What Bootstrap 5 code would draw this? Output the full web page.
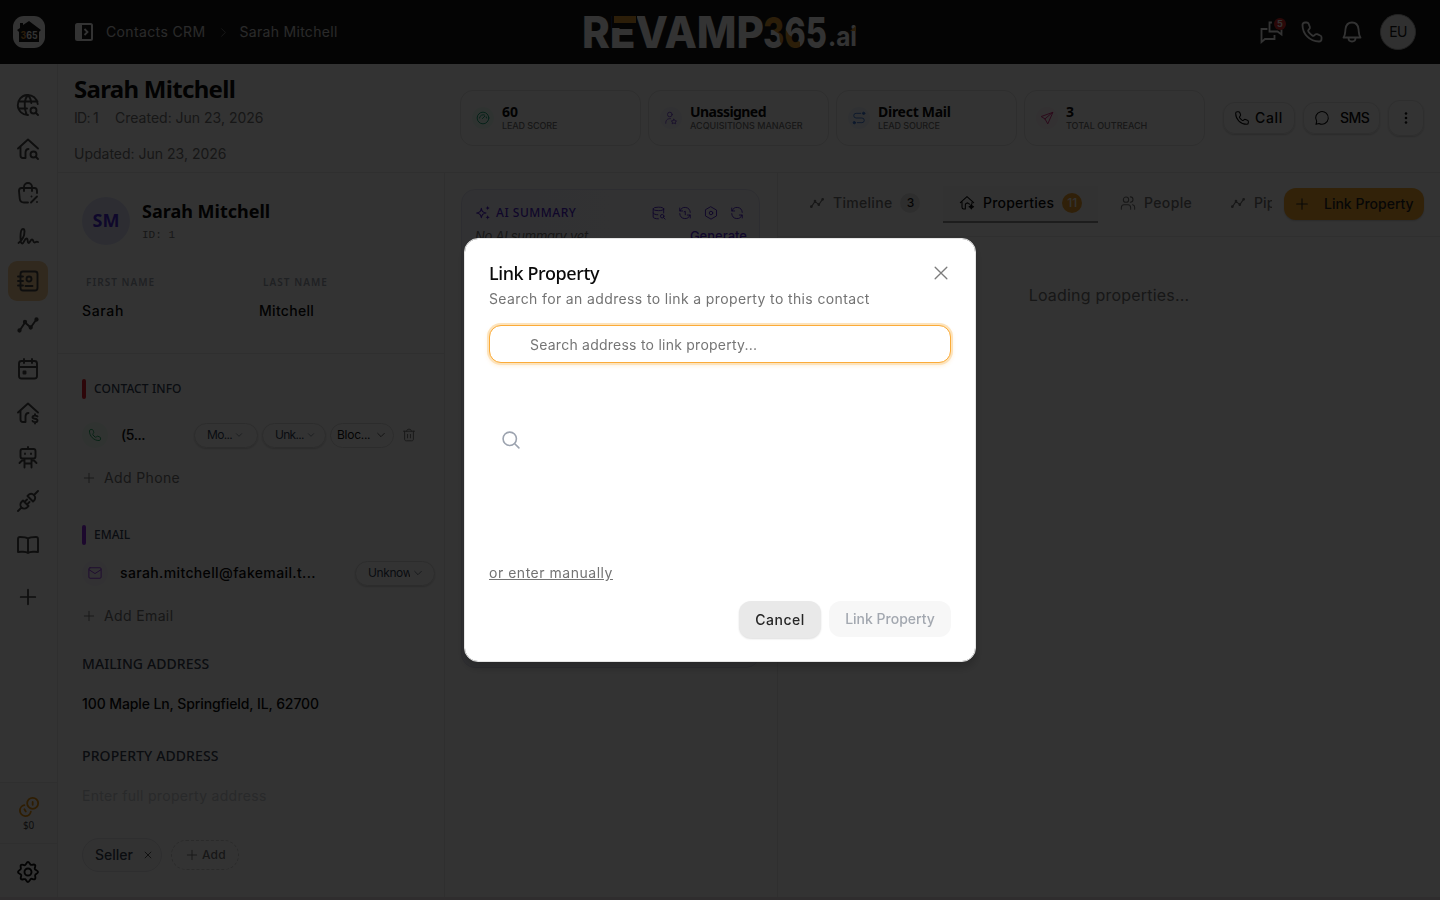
<!DOCTYPE html>
<html lang="en">
<head>
<meta charset="utf-8">
<meta name="viewport" content="width=device-width, initial-scale=1">
<title>Sarah Mitchell - Contacts CRM</title>
<link href="https://cdn.jsdelivr.net/npm/bootstrap@5.3.0/dist/css/bootstrap.min.css" rel="stylesheet">
<style>
body{font-family:Inter,"Liberation Sans",sans-serif;font-size:14px;line-height:1.4;color:#0a0a0a;background:#fff;height:900px;overflow:hidden}
span,h1,h2,p,a,button{white-space:nowrap}
.hd{font-family:"Noto Sans","Open Sans",sans-serif}
.mut{color:#737373}
.min-h0{min-height:0}
.min-w0{min-width:0}
.f9{font-size:9px}.f10{font-size:10px}.f12{font-size:12px}.f13{font-size:13px}.f18{font-size:18px}
/* letter tracking */
.t1{letter-spacing:.1px}.t2{letter-spacing:.2px}.t3{letter-spacing:.3px}.t4{letter-spacing:.37px}.t5{letter-spacing:.52px}.t7{letter-spacing:.67px}.t10{letter-spacing:1.04px}
.n1{letter-spacing:-.1px}.n3{letter-spacing:-.27px}.n4{letter-spacing:-.4px}.n5{letter-spacing:-.55px}.n7{letter-spacing:-.7px}
/* icons */
.ic{fill:none;stroke:currentColor;stroke-width:1.6;stroke-linecap:round;stroke-linejoin:round;flex:none;width:16px;height:16px}
.i8{width:8px;height:8px}.i10{width:10px;height:10px}.i14{width:14px;height:14px}.i20{width:20px;height:20px}.i22{width:22px;height:22px}.i24{width:24px;height:24px}
/* top bar */
.topbar{height:64px;background:#171717;color:#fff;flex:none}
.topbar .crumb{color:#d0d0d0}
.brand{width:32px;height:32px;border-radius:11px;background:#fff;margin-left:13px}
.toggle{margin:0 13px 0 30px}
.crumb-sep{width:9px;height:9px;margin:0 12px 0 13px;color:#777;stroke-width:2.5}
.wordmark{left:580px;top:0}
.top-actions{padding-right:24px;gap:16px}
.top-actions .ic{stroke-width:1.8}
.note{width:12px;height:12px;left:14px;top:-2px;background:#d62a2a;font-size:9px}
.avatar{width:36px;height:36px;background:#f0f0f0;border:1px solid #aaa;color:#171717}
/* rail */
.rail{width:58px;border-right:1px solid #ebebeb;color:#464646;flex:none}
.rail-list{padding:21px 1px 0 0}
.rail-item{width:40px;height:40px;border-radius:9px;margin-bottom:4px}
.rail-item.on{background:#f5cd98}
.rail-item .ic,.gear .ic{width:24px;height:24px;stroke-width:1.9}
.rail-add{margin-top:8px}
.rail-add .ic{width:22px;height:22px}
.rail-foot{border-top:1px solid #ebebeb;height:61px;background:#fafafa;padding-top:13px;line-height:14px}
.coins{color:#e8920c;stroke-width:2}
.gear{border-top:1px solid #ebebeb;height:57px;background:#fafafa;color:#111;padding-right:1px}
/* contact header */
.head{height:109px;border-bottom:1px solid #ebebeb;flex:none}
.who{width:402px;padding-left:16px;line-height:24px}
.who h1{font-size:24px;line-height:32px;margin:9px 0 1px}
.who .ids{gap:17px;height:24px;margin-bottom:12px}
.stats{gap:7px}
.stat{width:181px;height:56px;border:1px solid #e4e4e4;border-radius:13px;padding-left:11px;line-height:14px;gap:8px}
.stat>div{padding-top:2px}
.dot{width:22px;height:22px;border-radius:50%;flex:none}
.dot.lg{width:26px;height:26px}
.green{background:#ecfdf5;color:#10a070}.violet{background:#f5f3ff;color:#7c4dd8}.blue{background:#eff6ff;color:#3b76d6}.pink{background:#fdf2f8;color:#d6267c}.purple{background:#faf5ff;color:#9333ea}.lime{background:#f0fdf4;color:#16a35a}
.head-actions{gap:8px;padding-right:16px}
.pillbtn{height:32px;border:1px solid #e4e4e4;border-radius:12px;box-shadow:0 1px 2px #0003;font-weight:500}
.pb-call{width:72px;padding-left:10px;gap:5px}
.pb-sms{width:77px;padding-left:10px;gap:10px}
.pb-more{width:36px;height:36px}
/* left column */
.col-l{width:387px;border-right:1px solid #ebebeb;flex:none}
.row-x{padding-left:24px}
.person{padding-top:24px;gap:12px}
.initials{width:48px;height:48px;background:#e0e2fb;color:#4a2bd8}
.person .name{line-height:28px}
.mono{font:11px/20px "Liberation Mono",monospace}
.lab{height:20px;margin-top:27px;padding-left:28px;color:#9ca3af;line-height:20px}
.lab span:first-child,.val span:first-child{width:177px}
.val{height:61px;line-height:38px}
.rule{height:1px;background:#ebebeb}
.sect{gap:8px;color:#334155;padding-top:2px}
.h20{height:20px}.h26{height:26px}.h36{height:36px}.h44{height:44px}.h52{height:52px}.h60{height:60px}.h68{height:68px}.h98{height:98px}
.tick{width:4px;height:20px;border-radius:2px}
.tick.red{background:#e0202f}.tick.vio{background:#8b2be0}
.sel{height:25px;width:64px;border:1px solid #dcdcdc;border-radius:13px;font-size:12px;box-shadow:0 1px 2px #0003;color:#334155;padding-left:12px;margin-right:4px;gap:3px}
.sel.flat{box-shadow:none;padding-left:6px;gap:6px;color:#111}
.sel.wide{width:80px}
.clip{width:42px;overflow:hidden}
.num{margin-left:13px;width:73px}
.mail{margin-left:12px;width:235px}
.addr{color:#374151}
.ghost{color:#c9cbd0}
.add-row{gap:8px}
.chip{width:80px;height:34px;border-radius:17px;border:1px solid #e4e4e8;background:#fafafa;padding-left:12px;gap:10px;color:#374151}
.chip-add{width:68px;height:30px;border-radius:15px;border:1px dashed #d0d0d0;padding-left:13px;gap:3px}
.chips{gap:9px}
/* middle column */
.col-m{width:333px;border-right:1px solid #ebebeb;flex:none;padding:16px 0 0 16px}
.ai{width:299px;height:479px;border:1px solid #e2e2f2;border-radius:14px;background:linear-gradient(90deg,#f4f5ff,#faf9ff);color:#4f1fd0;padding:13px 12px 0 13px}
.ai-title{margin-left:5px;width:156px}
.ai-tools{gap:12px}
.ai-line{margin-top:4px}
/* right column */
.tabs{height:64px;border-bottom:1px solid #ebebeb;padding-right:16px}
.tab{gap:8px;padding-bottom:3px}
.tab-time{width:165px;padding-left:31px}
.tab-on{width:155px;height:37px;background:#fafafa;border-bottom:2px solid #8f8f8f;color:#0a0a0a;padding:0 0 0 16px;margin-top:-1px}
.tab-people{width:132px;padding-left:22px}
.tab-pipe{width:42px;margin-right:12px;overflow:hidden}
.cnt{width:20px;height:20px;border-radius:50%;font-size:12px;flex:none;background:#e6e6e6;color:#171717}
.cnt.hot{background:#f0a02d;color:#fff}
.link-btn{width:140px;height:32px;border-radius:12px;background:#fbab2e;color:#262626;padding-left:10px;gap:14px;box-shadow:0 1px 2px #0003;margin-top:-1px}
.loading{font-size:16px;margin-top:47px}
.strip{height:3px;background:#eadfe4}
/* dialog */
.modal-backdrop{--bs-backdrop-opacity:.8}
.modal-dialog{--bs-modal-width:512px}
.modal-content{height:424px;border:1px solid #e5e5e5;border-radius:14px;padding:24px 24px 23px;box-shadow:0 6px 10px #0003}
.modal-content>*{flex:none}
.modal-content h2{font-size:18px;font-weight:500;line-height:20px}
.modal-content p{line-height:20px;margin:6px 0 16px}
.close-x{color:#7c7c7c}
.modal-content .search{height:38px;border:1px solid #fbab38;border-radius:12px;box-shadow:0 0 0 2px #fde3bb,0 2px 4px 1px #fbab3830;padding:0 0 0 40px;font-size:14px;letter-spacing:.24px}
.search::placeholder{color:#757575}
.glass{margin:67px 0 113px 12px;color:#9ca3af;stroke-width:1.9}
.manual{line-height:20px;margin-bottom:18px}
.btn-x{height:36px;border-radius:12px;font-size:14px;font-weight:500;border:0}
.btn-cancel{width:82px;height:37px;background:#e9e9e9;color:#262626;box-shadow:0 1px 2px #0002}
.btn-link-p{width:122px;background:#f7f7f7;color:#a3a8b0}
</style>
</head>
<body class="d-flex flex-column">
<svg width="0" height="0" class="position-absolute">
<symbol id="phone" viewBox="0 0 24 24"><path d="M8.600 3.700C8.200 2.800 7.600 2.500 6.700 2.500H5C3.600 2.500 2.500 3.600 2.500 5c0 9.100 7.400 16.500 16.500 16.500 1.400 0 2.500-1.100 2.500-2.500v-1.700c0-.9-.5-1.500-1.300-1.800l-3-1.300c-.8-.3-1.500-.2-2.100.4l-1 .9c-.7.5-1.200.5-1.800 0a16 16 0 0 1-3.800-3.800c-.5-.6-.5-1.200 0-1.800l.9-1c.6-.6.7-1.300.4-2.100z"/></symbol>
<symbol id="trend" viewBox="0 0 24 24"><path d="M4 17 9 9.500 14.700 14.500 20 7"/><g fill="currentColor"><circle cx="3.500" cy="17.500" r="1.200"/><circle cx="9" cy="9" r="1.200"/><circle cx="14.700" cy="14.500" r="1.200"/><circle cx="20.500" cy="6.500" r="1.200"/></g></symbol>
<symbol id="plus" viewBox="0 0 24 24"><path d="M12 4v16M4 12h16"/></symbol>
<symbol id="x" viewBox="0 0 24 24"><path d="M5 5 19 19M19 5 5 19"/></symbol>
<symbol id="chev" viewBox="0 0 24 24"><path d="m4 8 8 8 8-8"/></symbol>
<symbol id="refresh" viewBox="0 0 24 24"><path d="M3 3.500v5h5M21 20.500v-5h-5M3.500 8.500A9 9 0 0 1 21 11M20.500 15.500A9 9 0 0 1 3 13"/></symbol>
<symbol id="house" viewBox="0 0 24 24"><path d="m2 11.500 10-9 10 9M4.500 9.500v9c0 2 .7 2.500 2.500 2.500h2.500v-5.500c0-2.300 1-3.500 3-3.500"/></symbol>
</svg>

<header class="topbar d-flex align-items-center position-relative">
  <div class="brand d-flex align-items-center justify-content-center">
    <svg width="26" height="24" viewBox="0 0 26 24"><path fill="#171717" d="M1 10 4 8V3h3v2l6-4 12 9-2 2v10H3V12z"/><text x="4.500" y="19" font-family="Inter" font-weight="700" font-size="10" textLength="17" lengthAdjust="spacingAndGlyphs" fill="#fff"><tspan fill="#d58f32">3</tspan>65</text></svg>
  </div>
  <svg class="toggle" width="18" height="18" viewBox="0 0 18 18"><rect x="1" y="1" width="16" height="16" rx="1.500" fill="none" stroke="#fff" stroke-width="2"/><path fill="#fff" d="M1 1h6v16H1z"/><path d="m9.500 6 3 3-3 3" fill="none" stroke="#fff" stroke-width="1.800"/></svg>
  <span class="crumb t4">Contacts CRM</span>
  <svg class="ic crumb-sep" viewBox="0 0 24 24"><path d="m7 2 10 10L7 22"/></svg>
  <span class="crumb t3">Sarah Mitchell</span>
  <svg class="wordmark position-absolute" width="280" height="64" viewBox="580 0 280 64" font-family="Inter,sans-serif" font-weight="800" font-size="44" fill="#fff">
    <defs><pattern id="duo" patternUnits="userSpaceOnUse" x="760" y="0" width="70" height="64"><path fill="#fff" d="M0 0h70v64H0z"/><path fill="#dc962f" d="M3 12h20v13l6 10 11 7v8H28l-8-8-1-8-6-4H3z"/></pattern></defs>
    <text x="582" y="48" textLength="182" lengthAdjust="spacingAndGlyphs">REVAMP</text>
    <path fill="#171717" d="M612 14h25v14h-25z"/><path fill="#dc962f" d="M614 16h22v7h-22z"/>
    <text x="763" y="47.500" font-size="43" textLength="64" lengthAdjust="spacingAndGlyphs" fill="url(#duo)">365</text>
    <text x="828" y="46" font-size="27" font-weight="700" textLength="29" lengthAdjust="spacingAndGlyphs">.ai</text><path fill="#dc962f" d="M850 31 856 26v5z"/>
  </svg>
  <div class="top-actions d-flex align-items-center ms-auto">
    <div class="position-relative i24"><svg class="ic i24 d-block" viewBox="0 0 24 24"><path stroke-linecap="square" stroke-linejoin="miter" d="M11 2.500H9.500v9h8l4 3v-4M6.500 9h-5v13l3.500-3h9.500v-3"/></svg><span class="note position-absolute rounded-circle d-flex align-items-center justify-content-center fw-bold">5</span></div>
    <svg class="ic i24"><use href="#phone"/></svg>
    <svg class="ic i24" viewBox="0 0 24 24"><path d="M3.500 17.500h17c-2-2.500-1.500-5-2-8.500-.5-4-3-6.500-6.500-6.500S6 5 5.500 9c-.5 3.500 0 6-2 8.500zM8.500 18c0 2 1.500 3.500 3.500 3.500s3.500-1.500 3.500-3.500"/></svg>
    <span class="avatar rounded-circle d-flex align-items-center justify-content-center n5">EU</span>
  </div>
</header>

<div class="d-flex flex-grow-1 min-h0">
  <nav class="rail d-flex flex-column">
    <div class="rail-list d-flex flex-column align-items-center flex-grow-1">
      <div class="rail-item d-flex align-items-center justify-content-center"><svg class="ic" viewBox="0 0 24 24"><path d="M21.700 11A10 10 0 1 0 12 22M2.500 8.500h19M2.500 15.500H11M12 2c-3.500 3.500-4.700 12-1.500 19M12 2c2 2 3 5 3.300 8"/><circle cx="17.500" cy="17.500" r="3"/><path d="m20 20 2 2"/></svg></div>
      <div class="rail-item d-flex align-items-center justify-content-center"><svg class="ic" viewBox="0 0 24 24"><use href="#house"/><circle cx="17.500" cy="17.500" r="3"/><path d="m20 20 2 2"/></svg></div>
      <div class="rail-item d-flex align-items-center justify-content-center"><svg class="ic" viewBox="0 0 24 24"><path d="M12 21.500H8c-3 0-4-1-4.300-4L3 10c0-2 .5-3 2.500-3h13C20 7 21 8 21 10v2M8 10V6a4 4 0 0 1 8 0v4M15 21.500l6-6M15.500 15.500h.01M21 21h.01"/></svg></div>
      <div class="rail-item d-flex align-items-center justify-content-center"><svg class="ic" viewBox="0 0 24 24"><path d="M2.500 18c4-3 6-8 6-11.500 0-1.500-.6-2.500-1.500-2.500-2 0-2.500 4-2.500 8s.5 6.500 1.800 6.500c1.700 0 2.200-5 4.200-5s.5 4.500 2 4.500 2-3.500 3.500-3.500 1 3 2.500 3 1.500-1.500 3.500-.5"/></svg></div>
      <div class="rail-item on d-flex align-items-center justify-content-center"><svg class="ic" viewBox="0 0 24 24"><rect x="4.500" y="2.500" width="17" height="19" rx="2.500"/><circle cx="13" cy="10" r="2.500"/><path d="M9.500 17h7M2 7.500h5M2 12h5M2 16.500h5"/></svg></div>
      <div class="rail-item d-flex align-items-center justify-content-center"><svg class="ic"><use href="#trend"/></svg></div>
      <div class="rail-item d-flex align-items-center justify-content-center"><svg class="ic" viewBox="0 0 24 24"><rect x="3" y="4" width="18" height="17.500" rx="2.500"/><path d="M3 10h18M8 2v4M16 2v4"/><path d="M7.500 14.500h2v2h-2z" fill="currentColor"/></svg></div>
      <div class="rail-item d-flex align-items-center justify-content-center"><svg class="ic" viewBox="0 0 24 24"><use href="#house"/><path d="M21.500 15.500c-.5-1-5-1.500-5 .7 0 2.300 5 .7 5 3.200 0 2.300-4.500 2-5 .6M19 13.300v1M19 21.500v1"/></svg></div>
      <div class="rail-item d-flex align-items-center justify-content-center"><svg class="ic" viewBox="0 0 24 24"><rect x="4.500" y="4" width="15" height="9.500" rx="2"/><path d="M12 2v2M9 8.500v.5M15 8.500v.5M8.500 14v8.500M15.500 14v8.500M8.500 18.500h7M8.500 15.500H6L3.500 18M15.500 15.500H18l2.500 2.500"/></svg></div>
      <div class="rail-item d-flex align-items-center justify-content-center"><svg class="ic" viewBox="0 0 24 24"><path d="m2 22 3.500-3.500M5.500 18.500a4 4 0 0 1 0-5.500l1.500-1.500L12.500 17 11 18.500a4 4 0 0 1-5.500 0zM8.500 13 11 10.500M11 15.500l2.500-2.500M22 2l-3.500 3.500M11.500 7 17 12.500 18.500 11a4 4 0 0 0-5.500-5.500z"/></svg></div>
      <div class="rail-item d-flex align-items-center justify-content-center"><svg class="ic" viewBox="0 0 24 24"><path d="M12 5.500C10 4 6 4 4 4c-1.500 0-2 .5-2 2v13c2-.5 8-.5 10 1 2-1.500 8-1.500 10-1V6c0-1.500-.5-2-2-2-2 0-6 0-8 1.500zM12 5.500V20"/></svg></div>
      <div class="rail-item rail-add d-flex align-items-center justify-content-center"><svg class="ic"><use href="#plus"/></svg></div>
    </div>
    <div class="rail-foot d-flex flex-column align-items-center">
      <svg class="ic i22 coins" viewBox="0 0 24 24"><circle cx="16" cy="8" r="6"/><path d="M16 6.500v3M7 10a6 6 0 1 0 7 7M7 14.500l1.500 2.500"/></svg>
      <span class="hd f10 n3">$0</span>
    </div>
    <div class="gear d-flex align-items-center justify-content-center"><svg class="ic" viewBox="0 0 24 24"><circle cx="12" cy="12" r="3.500"/><path d="M12 2c1.600 0 1.700 2.300 3 2.800s2.800-1 4 .2-.7 2.700-.2 4S22 10.400 22 12s-2.300 1.700-2.800 3 1 2.800-.2 4-2.700-.7-4-.2S13.600 22 12 22s-1.700-2.300-3-2.800-2.800 1-4-.2.7-2.700.2-4S2 13.600 2 12s2.300-1.700 2.800-3-1-2.800.2-4 2.700.7 4 .2S10.400 2 12 2z"/></svg></div>
  </nav>

  <main class="flex-grow-1 d-flex flex-column min-w0">
    <section class="head d-flex align-items-center">
      <div class="who align-self-start">
        <h1 class="hd fw-bold n7">Sarah Mitchell</h1>
        <div class="mut ids d-flex"><span class="n7">ID: 1</span><span>Created: Jun 23, 2026</span></div>
        <div class="mut">Updated: Jun 23, 2026</div>
      </div>
      <div class="stats d-flex">
        <div class="stat d-flex align-items-center"><span class="dot green d-flex align-items-center justify-content-center"><svg class="ic i14" viewBox="0 0 24 24"><circle cx="12" cy="12" r="10"/><path d="M6 12a6 6 0 0 1 9-5M17.500 10l.5 2M11 13l4-4"/></svg></span><div><div class="hd fw-bold">60</div><div class="mut f9 n1 fw-medium">LEAD SCORE</div></div></div>
        <div class="stat d-flex align-items-center"><span class="dot violet d-flex align-items-center justify-content-center"><svg class="ic i14" viewBox="0 0 24 24"><circle cx="10" cy="6" r="4"/><path d="M3 21c0-5 2-8 8-8M17 14l1.500 2.500 3 .5-2 2 .5 3-3-1.500-3 1.500.5-3-2-2 3-.5z"/></svg></span><div><div class="hd fw-bold n5">Unassigned</div><div class="mut f9 fw-medium">ACQUISITIONS MANAGER</div></div></div>
        <div class="stat d-flex align-items-center"><span class="dot blue d-flex align-items-center justify-content-center"><svg class="ic i14" viewBox="0 0 24 24"><path d="M15 4H7a4 4 0 0 0 0 8h10a4 4 0 0 1 0 8H9"/><g fill="currentColor"><circle cx="20" cy="4" r="2"/><circle cx="4" cy="20" r="2"/></g></svg></span><div><div class="hd fw-bold n3">Direct Mail</div><div class="mut f9 n1 fw-medium">LEAD SOURCE</div></div></div>
        <div class="stat d-flex align-items-center"><span class="dot pink d-flex align-items-center justify-content-center"><svg class="ic i14" viewBox="0 0 24 24"><path d="M21.500 2.500 2 9.500l6.500 4L13 21.500zM21.500 2.500 8.500 13.500"/></svg></span><div><div class="hd fw-bold">3</div><div class="mut f9 fw-medium">TOTAL OUTREACH</div></div></div>
      </div>
      <div class="head-actions d-flex align-items-center ms-auto">
        <span class="pillbtn pb-call d-flex align-items-center"><svg class="ic"><use href="#phone"/></svg><span class="t7">Call</span></span>
        <span class="pillbtn pb-sms d-flex align-items-center"><svg class="ic" viewBox="0 0 24 24"><path d="M3 21.500 4 17a9.500 9.500 0 1 1 3.500 3.200z"/></svg><span class="n5">SMS</span></span>
        <span class="pillbtn pb-more d-flex align-items-center justify-content-center"><svg width="16" height="16" fill="#111"><circle cx="8" cy="3.500" r="1.300"/><circle cx="8" cy="8" r="1.300"/><circle cx="8" cy="12.500" r="1.300"/></svg></span>
      </div>
    </section>

    <div class="d-flex flex-grow-1 min-h0">
      <section class="col-l">
        <div class="row-x person d-flex align-items-center">
          <span class="initials hd f18 rounded-circle d-flex align-items-center justify-content-center fw-bold">SM</span>
          <div><div class="name hd fw-bold f18">Sarah Mitchell</div><div class="mut mono">ID: 1</div></div>
        </div>
        <div class="lab d-flex hd fw-semibold f10"><span class="t10">FIRST NAME</span><span class="t10">LAST NAME</span></div>
        <div class="row-x val d-flex fw-medium"><span class="t7">Sarah</span><span class="t3">Mitchell</span></div>
        <div class="rule"></div>
        <div class="row-x sect h68 d-flex align-items-center hd f12 fw-medium"><i class="tick red"></i><span class="t1">CONTACT INFO</span></div>
        <div class="row-x h26 d-flex align-items-center">
          <span class="dot lg lime d-flex align-items-center justify-content-center"><svg class="ic i14"><use href="#phone"/></svg></span>
          <span class="num fw-medium n4">(5...</span>
          <span class="sel d-flex align-items-center"><span class="n7">Mo...</span><svg class="ic i8"><use href="#chev"/></svg></span>
          <span class="sel d-flex align-items-center"><span class="n7">Unk...</span><svg class="ic i8"><use href="#chev"/></svg></span>
          <span class="sel flat d-flex align-items-center"><span class="n3">Bloc...</span><svg class="ic i10"><use href="#chev"/></svg></span>
          <svg class="ic i14 mut ms-1" viewBox="0 0 24 24"><path d="M2.500 5.500h19M8 5.500c0-2 1-3.500 4-3.500s4 1.500 4 3.500M4.500 5.500V19c0 2 1 3 3 3h9c2 0 3-1 3-3V5.500M9.500 11v6M14.500 11v6"/></svg>
        </div>
        <div class="row-x h60 add-row mut d-flex align-items-center"><svg class="ic i14"><use href="#plus"/></svg><span class="t4">Add Phone</span></div>
        <div class="row-x sect h52 d-flex align-items-center hd f12 fw-medium"><i class="tick vio"></i><span>EMAIL</span></div>
        <div class="row-x h26 d-flex align-items-center">
          <span class="dot lg purple d-flex align-items-center justify-content-center"><svg class="ic i14" viewBox="0 0 24 24"><rect x="1.500" y="3" width="21" height="18" rx="2"/><path d="m2 6.500 10 6.500 10-6.500"/></svg></span>
          <span class="mail fw-medium t4">sarah.mitchell@fakemail.t...</span>
          <span class="sel wide d-flex align-items-center"><span class="clip n4">Unknown</span><svg class="ic i10"><use href="#chev"/></svg></span>
        </div>
        <div class="row-x h60 add-row mut d-flex align-items-center"><svg class="ic i14"><use href="#plus"/></svg><span class="t4">Add Email</span></div>
        <div class="row-x h36 addr hd fw-medium d-flex align-items-center"><span class="t1">MAILING ADDRESS</span></div>
        <div class="row-x h44 fw-medium d-flex align-items-center"><span class="n1">100 Maple Ln, Springfield, IL, 62700</span></div>
        <div class="row-x h60 addr hd fw-medium d-flex align-items-center"><span class="t1">PROPERTY ADDRESS</span></div>
        <div class="row-x h20 ghost d-flex align-items-center"><span class="t3">Enter full property address</span></div>
        <div class="row-x h98 chips d-flex align-items-center">
          <span class="chip d-flex align-items-center fw-medium">Seller<svg class="ic i10 text-black"><use href="#x"/></svg></span>
          <span class="chip-add mut f12 d-flex align-items-center fw-medium"><svg class="ic i14"><use href="#plus"/></svg><span class="t2">Add</span></span>
        </div>
      </section>

      <section class="col-m">
        <div class="ai">
          <div class="d-flex align-items-center h20">
            <svg class="ic" viewBox="0 0 24 24"><path d="M9.500 5c1 5 2 6 7 7-5 1-6 2-7 7-1-5-2-6-7-7 5-1 6-2 7-7z"/><g fill="currentColor" stroke="none"><path d="M19 1c.6 2.500 1.300 3 3.500 3.500C20.300 5 19.600 5.500 19 8c-.6-2.500-1.300-3-3.500-3.500C17.700 4 18.400 3.500 19 1zM19 15c.6 2.500 1.300 3 3.500 3.500-2.200.5-2.900 1-3.500 3.500-.6-2.500-1.300-3-3.500-3.500 2.200-.5 2.900-1 3.500-3.500z"/></g></svg>
            <span class="ai-title hd f12 fw-medium t5">AI SUMMARY</span>
            <div class="ai-tools d-flex">
              <svg class="ic i14" viewBox="0 0 24 24"><ellipse cx="11" cy="5" rx="9" ry="3"/><path d="M2 5v14c0 1.700 4 3 9 3M20 5v7M2 12c0 1.700 4 3 8 3"/><circle cx="17.500" cy="17.500" r="3"/><path d="m20 20 2.500 2.500"/></svg>
              <svg class="ic i14" viewBox="0 0 24 24"><use href="#refresh"/><path d="M10.500 10 12.500 9v6"/></svg>
              <svg class="ic i14" viewBox="0 0 24 24"><path d="M12 1.500 21.500 7v10L12 22.500 2.500 17V7z"/><circle cx="12" cy="12" r="3"/></svg>
              <svg class="ic i14"><use href="#refresh"/></svg>
            </div>
          </div>
          <div class="ai-line d-flex justify-content-between"><span class="fst-italic mut f13 n3">No AI summary yet</span><span class="text-decoration-underline fw-medium f13">Generate</span></div>
        </div>
      </section>

      <section class="flex-grow-1">
        <div class="tabs mut fw-medium d-flex align-items-center">
          <div class="tab tab-time d-flex align-items-center"><svg class="ic"><use href="#trend"/></svg><span class="t3">Timeline</span><span class="cnt d-flex align-items-center justify-content-center">3</span></div>
          <div class="tab tab-on d-flex align-items-center"><svg class="ic" viewBox="0 0 24 24"><use href="#house"/><path d="M19.500 11v2M12.500 12c2 0 3 1 3 2"/><path fill="currentColor" d="M18.500 14c.5 2.500 1 3 3.500 3.500-2.500.5-3 1-3.500 3.500-.5-2.500-1-3-3.500-3.500 2.500-.5 3-1 3.500-3.500z"/></svg><span class="t2">Properties</span><span class="cnt hot d-flex align-items-center justify-content-center">11</span></div>
          <div class="tab tab-people d-flex align-items-center"><svg class="ic" viewBox="0 0 24 24"><circle cx="9" cy="7" r="4"/><path d="M2 21.500V19c0-3 2-4.500 4-4.500h6c2 0 4 1.500 4 4.500v2.500M15.500 2.800a4 4 0 0 1 0 8M19 14.500c2 .5 3 2 3 4v3"/></svg><span class="t4">People</span></div>
          <div class="tab tab-pipe d-flex align-items-center"><svg class="ic"><use href="#trend"/></svg><span class="t1">Pipeline</span></div>
          <span class="link-btn d-flex align-items-center"><svg class="ic"><use href="#plus"/></svg><span>Link Property</span></span>
        </div>
        <p class="loading text-center mut mb-0 t2">Loading properties...</p>
      </section>
    </div>
  </main>
</div>
<div class="strip position-absolute bottom-0 w-100"></div>

<div class="modal-backdrop show"></div>
<div class="modal d-block" tabindex="-1" role="dialog">
  <div class="modal-dialog modal-dialog-centered">
    <div class="modal-content">
      <div class="d-flex justify-content-between"><h2 class="hd mb-0 n4">Link Property</h2><svg class="ic i20 close-x"><use href="#x"/></svg></div>
      <p class="mut t4">Search for an address to link a property to this contact</p>
      <input class="search form-control" placeholder="Search address to link property...">
      <svg class="ic i20 glass" viewBox="0 0 24 24"><circle cx="10.500" cy="10.500" r="8"/><path d="m16.500 16.500 5 5"/></svg>
      <a class="manual mut text-decoration-underline align-self-start t5">or enter manually</a>
      <div class="d-flex justify-content-end align-items-start gap-2">
        <button class="btn-x btn-cancel t5">Cancel</button>
        <button class="btn-x btn-link-p">Link Property</button>
      </div>
    </div>
  </div>
</div>
<script src="https://cdn.jsdelivr.net/npm/bootstrap@5.3.0/dist/js/bootstrap.bundle.min.js"></script>
</body>
</html>
